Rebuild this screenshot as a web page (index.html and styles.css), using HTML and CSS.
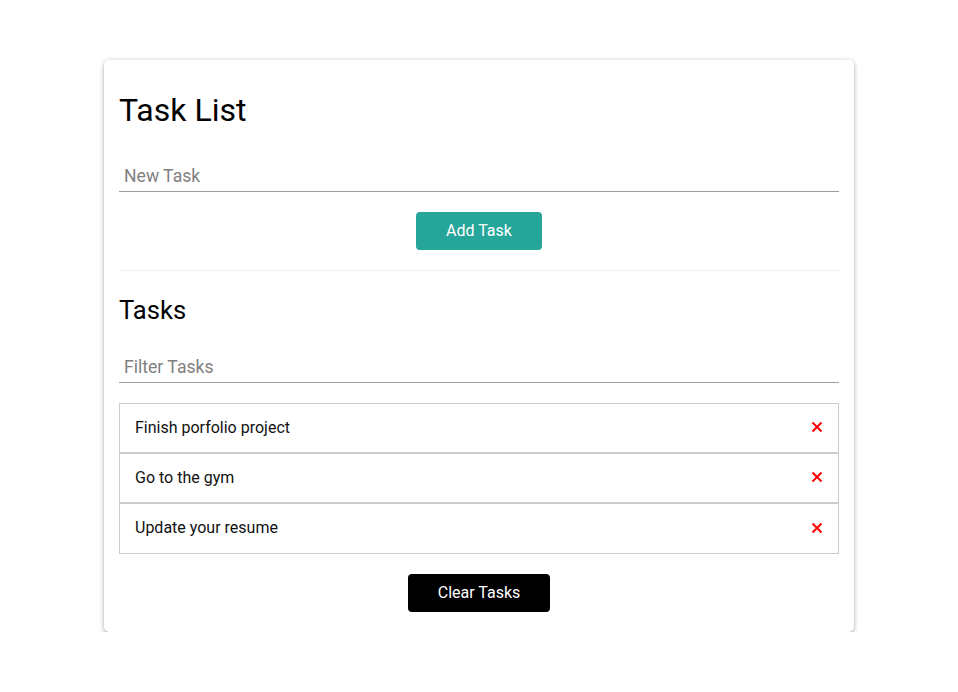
FILE: index.html
```html
<!DOCTYPE html>
<html lang="en">
<head>
<meta charset="utf-8">
<title>Task List</title>
<link rel="stylesheet" href="styles.css">
</head>
<body>
<div class="page">
  <div class="card">
    <h1 class="title">Task List</h1>
    <form class="task-form">
      <input class="field field-new" type="text" placeholder="New Task">
      <div class="btn-row"><button type="button" class="btn btn-add">Add Task</button></div>
    </form>
    <div class="divider"></div>
    <h2 class="subtitle">Tasks</h2>
    <input class="field field-filter" type="text" placeholder="Filter Tasks">
    <ul class="collection">
      <li class="item"><span>Finish porfolio project</span><a class="del" href="#"><svg width="12" height="12" viewBox="0 0 12 12"><path d="M1.5 1.5L10.5 10.5M10.5 1.5L1.5 10.5" stroke="#ff0000" stroke-width="2" fill="none"/></svg></a></li>
      <li class="item"><span>Go to the gym</span><a class="del" href="#"><svg width="12" height="12" viewBox="0 0 12 12"><path d="M1.5 1.5L10.5 10.5M10.5 1.5L1.5 10.5" stroke="#ff0000" stroke-width="2" fill="none"/></svg></a></li>
      <li class="item"><span>Update your resume</span><a class="del" href="#"><svg width="12" height="12" viewBox="0 0 12 12"><path d="M1.5 1.5L10.5 10.5M10.5 1.5L1.5 10.5" stroke="#ff0000" stroke-width="2" fill="none"/></svg></a></li>
    </ul>
    <div class="btn-row"><button type="button" class="btn btn-clear">Clear Tasks</button></div>
  </div>
</div>
</body>
</html>
```

FILE: styles.css
```css
html, body {
  margin: 0;
  padding: 0;
  background: #fff;
  font-family: Roboto, "Liberation Sans", sans-serif;
  color: #000;
}
.page {
  padding-top: 60px;
  display: flex;
  justify-content: center;
}
.card {
  width: 750px;
  box-sizing: border-box;
  padding: 15px 15px 20px;
  background: #fff;
  border-radius: 5px;
  box-shadow: 0 1px 5px 0 rgba(0,0,0,0.3), 0 2px 2px 0 rgba(0,0,0,0.1);
}
.title {
  margin: 15px 0 0;
  font-size: 32px;
  line-height: 40px;
  font-weight: 400;
}
.task-form { margin: 0; }
.field {
  display: block;
  width: 100%;
  box-sizing: border-box;
  height: 36px;
  padding: 4px 5px 0;
  border: none;
  border-bottom: 1px solid #9e9e9e;
  outline: none;
  font-family: Roboto, "Liberation Sans", sans-serif;
  font-size: 17.6px;
  color: #000;
  background: transparent;
}
.field-new { margin: 26px 0 0; }
.field-filter { margin: 22px 0 0; }
.field::placeholder { color: #808080; }
.btn-row {
  display: flex;
  justify-content: center;
  margin-top: 20px;
}
.btn {
  height: 38px;
  border: none;
  border-radius: 4px;
  color: #fff;
  font-family: Roboto, "Liberation Sans", sans-serif;
  font-size: 16px;
  padding: 0 0 2px;
  cursor: pointer;
}
.btn-add { width: 126px; background: #26a69a; }
.btn-clear { width: 142px; background: #000; }
.divider {
  height: 1px;
  background: #eeeeee;
  margin-top: 20px;
}
.subtitle {
  margin: 24px 0 0;
  font-size: 25.6px;
  line-height: 30px;
  font-weight: 400;
}
.collection {
  list-style: none;
  margin: 20px 0 0;
  padding: 0;
}
.item {
  height: 50px;
  box-sizing: border-box;
  border: 1px solid #cccccc;
  display: flex;
  align-items: center;
  justify-content: space-between;
  padding: 0 15px 2px;
  font-size: 16px;
  color: #111;
}
.item:last-child { height: 51px; }
.del {
  display: flex;
  align-items: center;
  text-decoration: none;
}
```
